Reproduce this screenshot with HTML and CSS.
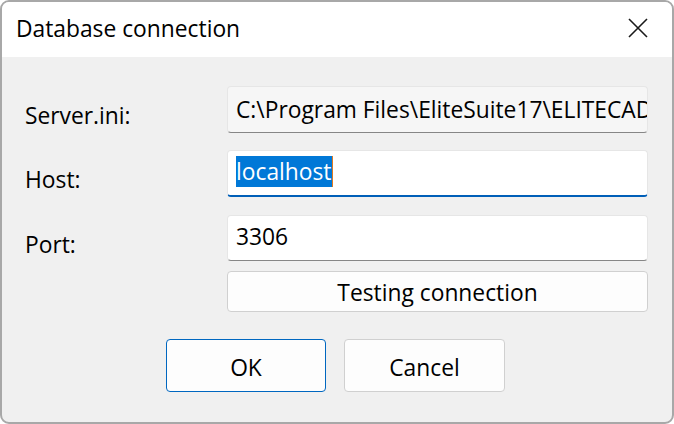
FILE: index.html
```html
<!DOCTYPE html>
<html>
<head>
<meta charset="utf-8">
<link rel="stylesheet" href="styles.css">
</head>
<body>
<div class="dialog">
  <div class="titlebar">
    <span class="title">Database connection</span>
    <span class="close">
      <svg width="20" height="20" viewBox="0 0 20 20"><path d="M1 1 L19 19 M19 1 L1 19" stroke="#1a1a1a" stroke-width="1.6" fill="none"/></svg>
    </span>
  </div>
  <div class="content">
    <div class="form">
      <div class="row r1">
        <div class="label">Server.ini:</div>
        <div class="field readonly">C:\Program Files\EliteSuite17\ELITECAD\Server.ini</div>
      </div>
      <div class="row r2">
        <div class="label">Host:</div>
        <div class="field focused"><span class="sel">localhost</span></div>
      </div>
      <div class="row r3">
        <div class="label">Port:</div>
        <div class="field">3306</div>
      </div>
      <div class="row r4">
        <div class="label"></div>
        <div class="btn test">Testing connection</div>
      </div>
    </div>
    <div class="actions">
      <div class="btn action default ok">OK</div>
      <div class="btn action cancel">Cancel</div>
    </div>
  </div>
</div>
</body>
</html>
```
FILE: styles.css
```css
html, body {
  margin: 0;
  padding: 0;
  background: #ffffff;
}
body {
  width: 674px;
  height: 424px;
  font-family: "Open Sans", "Noto Sans", sans-serif;
  font-size: 22.8px;
  color: #000;
}
.dialog {
  box-sizing: border-box;
  width: 674px;
  height: 424px;
  border: 2px solid #a8a8a8;
  border-radius: 9px;
  overflow: hidden;
  display: flex;
  flex-direction: column;
  background: #f0f0f0;
}
.titlebar {
  height: 55px;
  flex: none;
  background: #ffffff;
  display: flex;
  align-items: center;
  justify-content: space-between;
  padding: 0 24px 0 14px;
}
.title {
  font-size: 22.8px;
  margin-top: -2px;
}
.close {
  display: flex;
  margin-top: -4px;
}
.content {
  flex: 1;
  padding: 29px 24px 0 23px;
}
.form {
  display: flex;
  flex-direction: column;
}
.row {
  display: flex;
}
.r1 { height: 47px; }
.r2 { height: 47px; margin-top: 17px; }
.r3 { height: 46px; margin-top: 18px; }
.r4 { height: 41px; margin-top: 10px; }
.label {
  width: 202px;
  flex: none;
  align-self: center;
  padding-top: 12px;
}
.field {
  box-sizing: border-box;
  width: 421px;
  flex: none;
  background: #ffffff;
  border: 1px solid #e6e6e6;
  border-bottom: 1px solid #868686;
  border-radius: 4px;
  padding: 0 0 3px 8px;
  display: flex;
  align-items: center;
  white-space: nowrap;
  overflow: hidden;
}
.field.readonly {
  background: #f6f6f6;
  padding-bottom: 0;
}
.field.focused {
  border-bottom: 2px solid #005fb8;
  padding-bottom: 4px;
}
.sel {
  background: #0078d7;
  color: #ffffff;
  line-height: 31px;
  border-right: 1px solid #e07a1f;
}
.btn {
  box-sizing: border-box;
  background: #fdfdfd;
  border: 1px solid #d0d0d0;
  border-radius: 4px;
  display: flex;
  align-items: center;
  justify-content: center;
}
.btn.test {
  width: 421px;
  padding-top: 2px;
}
.actions {
  display: flex;
  gap: 18px;
  padding-left: 141px;
  margin-top: 27px;
}
.btn.action {
  height: 53px;
  padding-top: 3px;
}
.ok { width: 160px; }
.cancel { width: 161px; }
.btn.default {
  border-color: #0067c0;
}
```
